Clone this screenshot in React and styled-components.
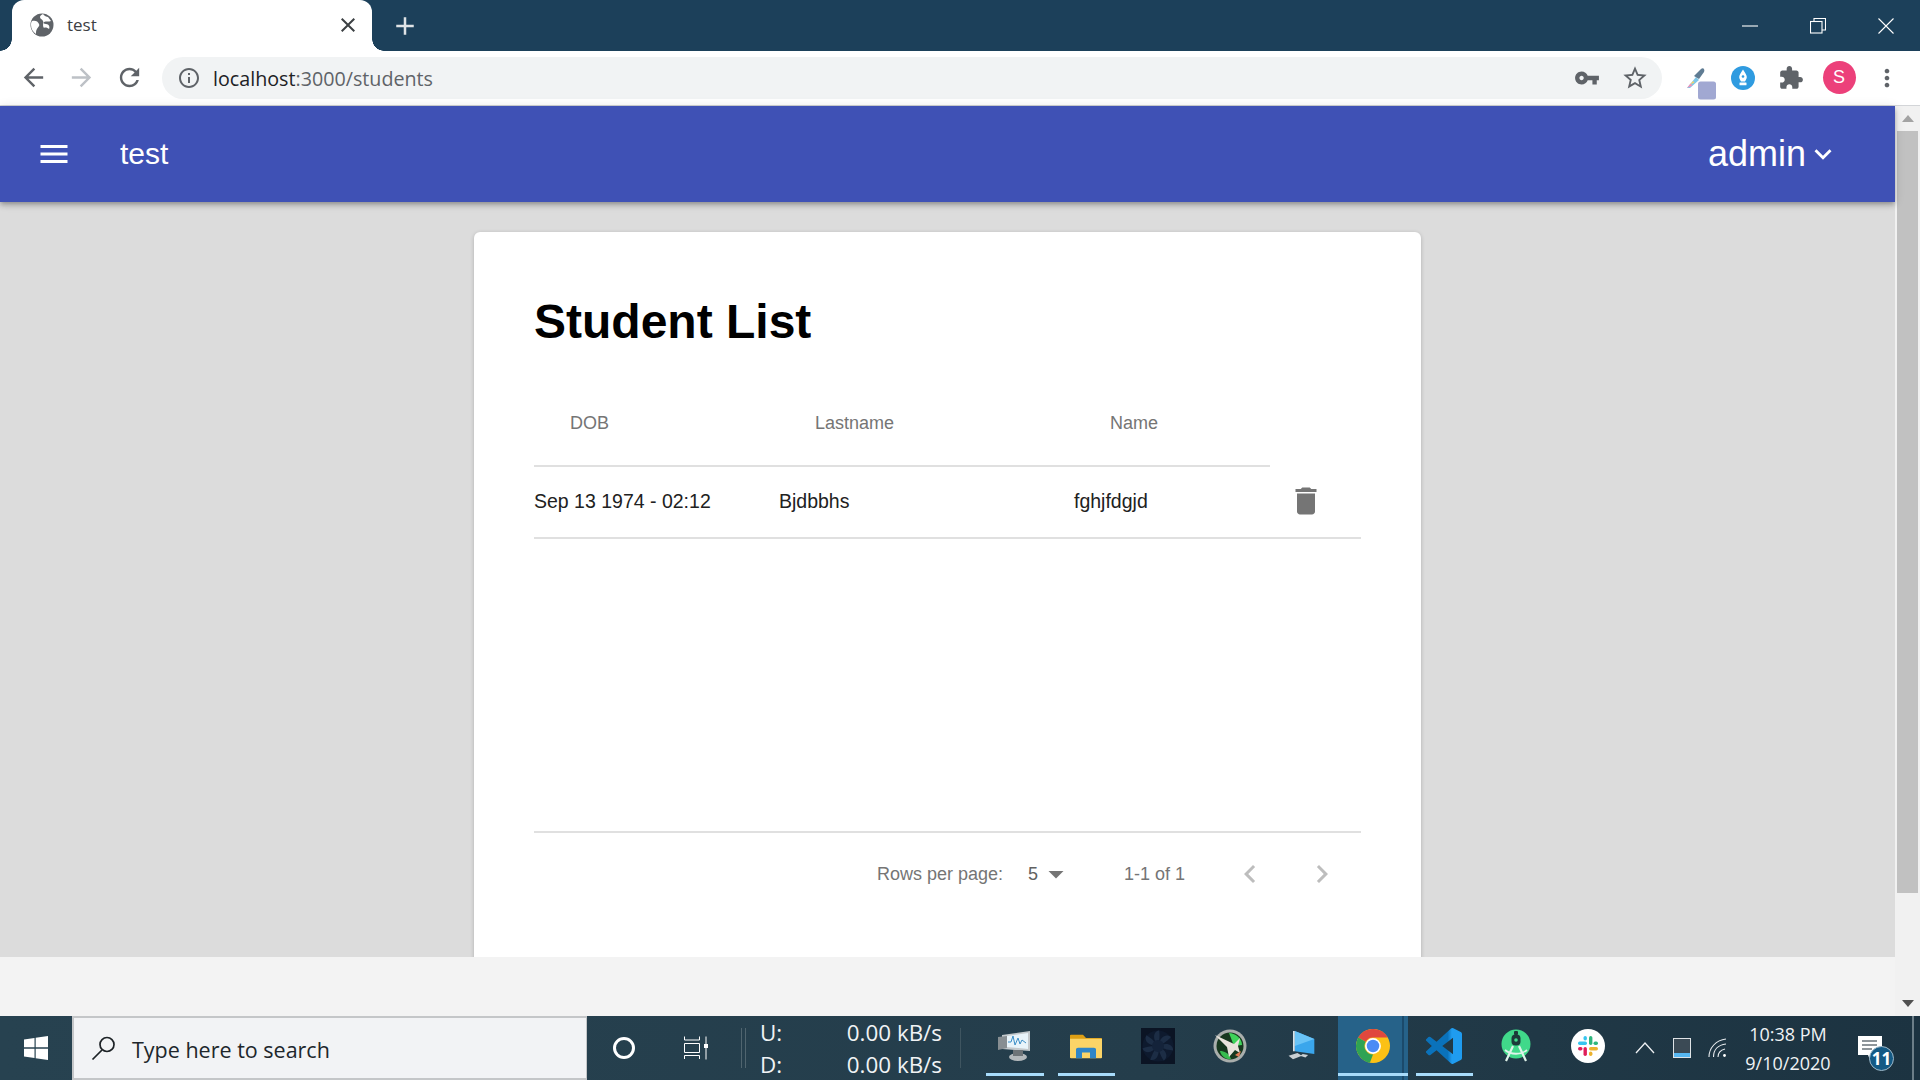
import React from "react"
import styled, { createGlobalStyle } from "styled-components"

const ICONS = {
  close:
    "M19 6.41L17.59 5 12 10.59 6.41 5 5 6.41 10.59 12 5 17.59 6.41 19 12 13.41 17.59 19 19 17.59 13.41 12z",
  plus: "M19 13h-6v6h-2v-6H5v-2h6V5h2v6h6v2z",
  back: "M20 11H7.83l5.59-5.59L12 4l-8 8 8 8 1.41-1.41L7.83 13H20v-2z",
  forward: "M4 11h12.17l-5.59-5.59L12 4l8 8-8 8-1.41-1.41L16.17 13H4v-2z",
  reload:
    "M17.65 6.35C16.2 4.9 14.21 4 12 4c-4.42 0-7.99 3.58-7.99 8s3.57 8 7.99 8c3.73 0 6.84-2.55 7.73-6h-2.08c-.82 2.33-3.04 4-5.65 4-3.31 0-6-2.69-6-6s2.69-6 6-6c1.66 0 3.14.69 4.22 1.78L13 11h7V4l-2.35 2.35z",
  info:
    "M11 7h2v2h-2zm0 4h2v6h-2zm1-9C6.48 2 2 6.48 2 12s4.48 10 10 10 10-4.48 10-10S17.52 2 12 2zm0 18c-4.41 0-8-3.59-8-8s3.59-8 8-8 8 3.59 8 8-3.59 8-8 8z",
  key: "M12.65 10C11.83 7.67 9.61 6 7 6c-3.31 0-6 2.69-6 6s2.69 6 6 6c2.61 0 4.83-1.67 5.65-4H17v4h4v-4h2v-4H12.65zM7 14c-1.1 0-2-.9-2-2s.9-2 2-2 2 .9 2 2-.9 2-2 2z",
  star:
    "M22 9.24l-7.19-.62L12 2 9.19 8.63 2 9.24l5.46 4.73L5.82 21 12 17.27 18.18 21l-1.63-7.03L22 9.24zM12 15.4l-3.76 2.27 1-4.28-3.32-2.88 4.38-.38L12 6.1l1.71 4.04 4.38.38-3.32 2.88 1 4.28L12 15.4z",
  puzzle:
    "M20.5 11H19V7c0-1.1-.9-2-2-2h-4V3.5C13 2.12 11.88 1 10.5 1S8 2.12 8 3.5V5H4c-1.1 0-1.99.9-1.99 2v3.8H3.5c1.49 0 2.7 1.21 2.7 2.7s-1.21 2.7-2.7 2.7H2V20c0 1.1.9 2 2 2h3.8v-1.5c0-1.49 1.21-2.7 2.7-2.7 1.49 0 2.7 1.21 2.7 2.7V22H17c1.1 0 2-.9 2-2v-4h1.5c1.38 0 2.5-1.12 2.5-2.5S21.88 11 20.5 11z",
  dots:
    "M12 8c1.1 0 2-.9 2-2s-.9-2-2-2-2 .9-2 2 .9 2 2 2zm0 2c-1.1 0-2 .9-2 2s.9 2 2 2 2-.9 2-2-.9-2-2-2zm0 6c-1.1 0-2 .9-2 2s.9 2 2 2 2-.9 2-2-.9-2-2-2z",
  menu: "M3 18h18v-2H3v2zm0-5h18v-2H3v2zm0-7v2h18V6H3z",
  down: "M7.41 8.59L12 13.17l4.59-4.58L18 10l-6 6-6-6 1.41-1.41z",
  trash: "M6 19c0 1.1.9 2 2 2h8c1.1 0 2-.9 2-2V7H6v12zM19 4h-3.5l-1-1h-5l-1 1H5v2h14V4z",
  caret: "M7 10l5 5 5-5z",
  prev: "M15.41 7.41L14 6l-6 6 6 6 1.41-1.41L10.83 12z",
  next: "M10 6L8.59 7.41 13.17 12l-4.58 4.59L10 18l6-6z",
}

const GlobalStyle = createGlobalStyle`
  html, body {
    margin: 0;
    padding: 0;
    overflow: hidden;
    background: #f3f3f3;
    font-family: "Liberation Sans", Arial, sans-serif;
  }
  * { box-sizing: border-box; }
`

const Screen = styled.div`
  width: 1920px;
  height: 1080px;
  display: flex;
  flex-direction: column;
  overflow: hidden;
`

const Svg = styled.svg`
  display: block;
  flex: none;
  width: ${(p) => p.$size}px;
  height: ${(p) => p.$size}px;
  fill: ${(p) => p.$color || "currentColor"};
`

const Icon = ({ name, size = 24, color }) => (
  <Svg viewBox="0 0 24 24" $size={size} $color={color}>
    <path d={ICONS[name]} />
  </Svg>
)

/* browser chrome */

const TabStrip = styled.div`
  height: 51px;
  flex: none;
  display: flex;
  align-items: flex-end;
  padding-left: 12px;
  background: #1c405a;
  color: #fff;
`

const Tab = styled.div`
  position: relative;
  width: 360px;
  height: 51px;
  display: flex;
  align-items: center;
  padding: 0 12px 2px 17px;
  background: #fff;
  border-radius: 12px 12px 0 0;
  color: #3c4043;

  &::before,
  &::after {
    content: "";
    position: absolute;
    bottom: 0;
    width: 12px;
    height: 12px;
  }
  &::before {
    left: -12px;
    background: radial-gradient(circle at 0 0, transparent 11.5px, #fff 12px);
  }
  &::after {
    right: -12px;
    background: radial-gradient(circle at 100% 0, transparent 11.5px, #fff 12px);
  }
`

const TabTitle = styled.span`
  flex: 1;
  margin-left: 12px;
  font: 17px "Open Sans", sans-serif;
  color: #3c4043;
`

const NewTab = styled.div`
  margin-left: 18px;
  align-self: center;
  color: #dfe3e6;
`

const WindowControls = styled.div`
  margin-left: auto;
  height: 100%;
  display: flex;
  align-items: center;
`

const WindowButton = styled.div`
  width: 68px;
  display: flex;
  justify-content: center;
`

const LineIcon = styled.svg`
  width: 16px;
  height: 16px;
  fill: none;
  stroke: #fff;
  stroke-width: 1.1;
`

const Toolbar = styled.div`
  height: 55px;
  flex: none;
  display: flex;
  align-items: center;
  padding: 0 9px 1px;
  background: #fff;
  border-bottom: 1px solid #d3d5d8;
`

const ToolButton = styled.div`
  width: 48px;
  height: 48px;
  flex: none;
  display: flex;
  align-items: center;
  justify-content: center;
`

const Omnibox = styled.div`
  flex: 1;
  height: 42px;
  margin: 0 9px;
  display: flex;
  align-items: center;
  padding: 0 3px 0 15px;
  background: #f1f3f4;
  border-radius: 21px;
`

const Url = styled.div`
  flex: 1;
  margin-left: 12px;
  padding-top: 1px;
  font: 19.7px "Open Sans", sans-serif;
  color: #5f6368;
`

const UrlHost = styled.span`
  color: #202124;
`

const OmniAction = styled.div`
  width: 48px;
  display: flex;
  justify-content: center;
`

const Avatar = styled.div`
  width: 33px;
  height: 33px;
  border-radius: 50%;
  display: flex;
  align-items: center;
  justify-content: center;
  background: #ec407a;
  color: #fff;
  font-size: 18px;
`

/* page */

const Viewport = styled.div`
  flex: 1;
  min-height: 0;
  display: flex;
`

const PageColumn = styled.div`
  flex: 1;
  min-width: 0;
  display: flex;
  flex-direction: column;
`

const AppBar = styled.header`
  position: relative;
  z-index: 2;
  height: 96px;
  flex: none;
  display: flex;
  align-items: center;
  padding: 0 55px 0 36px;
  background: #3f51b5;
  color: #fff;
  box-shadow: 0 2px 4px -1px rgba(0, 0, 0, 0.2), 0 4px 5px rgba(0, 0, 0, 0.14),
    0 1px 10px rgba(0, 0, 0, 0.12);
`

const AppTitle = styled.div`
  margin-left: 48px;
  font-size: 30px;
`

const UserMenu = styled.div`
  margin-left: auto;
  display: flex;
  align-items: center;
  font-size: 36px;
`

const Content = styled.main`
  flex: 1;
  min-height: 0;
  overflow: hidden;
  padding-top: 30px;
  background: #dcdcdc;
`

const Card = styled.section`
  width: 947px;
  height: 900px;
  margin: 0 auto;
  padding: 61px 60px;
  background: #fff;
  border-radius: 6px;
  box-shadow: 0 1px 4px rgba(0, 0, 0, 0.2);
`

const Title = styled.h1`
  margin: 0 0 31px;
  font-size: 48px;
  line-height: 58px;
  font-weight: 700;
  color: #000;
`

const Table = styled.table`
  width: 100%;
  table-layout: fixed;
  border-collapse: collapse;
`

const HeadCell = styled.th`
  height: 84px;
  padding: 0 0 0 36px;
  text-align: left;
  font-size: 18px;
  font-weight: 400;
  color: #757575;
  border-bottom: ${(p) => (p.$empty ? "none" : "2px solid #e0e0e0")};
`

const Cell = styled.td`
  height: 72px;
  padding: 0 0 2px;
  font-size: 19.5px;
  color: #212121;
  border-bottom: 2px solid #e0e0e0;
`

const TrashWrap = styled.div`
  width: 72px;
  display: flex;
  justify-content: center;
`

const Filler = styled.td`
  height: 293px;
  padding: 0;
`

const Pagination = styled.div`
  height: 84px;
  display: flex;
  align-items: center;
  padding-left: 343px;
  border-top: 2px solid #e0e0e0;
  font-size: 18px;
  color: #757575;
`

const PerPage = styled.div`
  margin-left: 25px;
  display: flex;
  align-items: center;
  color: #616161;
`

const PageRange = styled.span`
  margin-left: 50px;
`

const PageButton = styled.div`
  width: 72px;
  display: flex;
  justify-content: center;
  margin-left: ${(p) => p.$gap || 0}px;
`

const BottomStrip = styled.div`
  height: 59px;
  flex: none;
  background: #f3f3f3;
`

const Scrollbar = styled.aside`
  width: 25px;
  flex: none;
  display: flex;
  flex-direction: column;
  align-items: center;
  background: #f1f1f1;
`

const ScrollArrow = styled.div`
  height: 25px;
  flex: none;
  display: flex;
  align-items: center;
  color: ${(p) => p.$color};
`

const ScrollThumb = styled.div`
  width: 21px;
  height: 762px;
  background: #c1c1c1;
`

const ScrollTrack = styled.div`
  flex: 1;
`

/* taskbar */

const Taskbar = styled.footer`
  height: 64px;
  flex: none;
  display: flex;
  align-items: stretch;
  background: linear-gradient(90deg, #274250 0%, #243d4b 60%, #1c3341 100%);
  color: #f0f3f5;
  font-family: "Open Sans", sans-serif;
`

const TaskSlot = styled.div`
  width: ${(p) => p.$width || 72}px;
  flex: none;
  display: flex;
  align-items: center;
  justify-content: center;
`

const SearchBox = styled.div`
  width: 515px;
  flex: none;
  display: flex;
  align-items: center;
  padding-left: 17px;
  background: #f2f3f5;
  border: 2px solid #c4c6c8;
  border-right-width: 1px;
  color: #20262b;
  font-size: 21.5px;
`

const SearchLabel = styled.span`
  margin-left: 15px;
  padding-top: 2px;
`

const DoubleRule = styled.div`
  width: 5px;
  height: 40px;
  flex: none;
  margin: 12px 0 0 9px;
  border-left: 1px solid #50656f;
  border-right: 1px solid #50656f;
`

const Meter = styled.div`
  width: 182px;
  margin-left: 14px;
  padding-top: 2px;
  flex: none;
  display: flex;
  flex-direction: column;
  justify-content: center;
  font-size: 22.4px;
  line-height: 32px;
`

const MeterRow = styled.div`
  display: flex;
  justify-content: space-between;
`

const Rule = styled.div`
  width: 1px;
  height: 40px;
  margin: 12px 18px 0 18px;
  flex: none;
  background: #3f5560;
`

const AppSlot = styled.div`
  width: 71.6px;
  flex: none;
  display: flex;
  flex-direction: column;
  background: ${(p) => (p.$active ? "linear-gradient(90deg,#266289 0,#266289 90%,#1b4a6b 90%,#1b4a6b 93%,#266289 93%)" : "transparent")};
  background-clip: content-box;
  padding: ${(p) => (p.$active ? "0 1px" : "0")};
`

const AppIcon = styled.div`
  flex: 1;
  display: flex;
  align-items: center;
  justify-content: center;
  padding-top: 3px;
`

const RunningBar = styled.div`
  height: 3px;
  margin: ${(p) => (p.$full ? "0" : "0 7px")};
  margin-bottom: 4px;
  background: ${(p) => (p.$on ? "#a8dcfb" : "transparent")};
`

const Tray = styled.div`
  flex: none;
  display: flex;
  align-items: center;
  padding-left: 3.6px;
`

const Clock = styled.div`
  width: 104px;
  padding-top: 2px;
  text-align: center;
  font-size: 18px;
  line-height: 29px;
`

const Notice = styled.div`
  position: relative;
  width: 40px;
  height: 40px;
  margin: 0 14px 0 18px;
  padding-top: 8px;
`

const Badge = styled.div`
  position: absolute;
  right: 4px;
  bottom: -3px;
  width: 25px;
  height: 25px;
  display: flex;
  align-items: center;
  justify-content: center;
  border-radius: 50%;
  background: #145a85;
  border: 1px solid #9fb9c9;
  color: #fff;
  font-size: 17px;
  font-weight: 700;
`

const Edge = styled.div`
  width: 2px;
  height: 64px;
  flex: none;
  margin-right: 6px;
  background: #6c7e88;
`

/* drawn logos */

const Globe = () => (
  <svg width="26" height="26" viewBox="0 0 26 26">
    <circle cx="13" cy="13" r="11.500" fill="#5f6368" />
    <path d="M3 9c3-1 6 0 7 3 1 2-1 3-2 5-1 1-1 3-1 5-3-2-5-5-5-9 0-1 0-3 1-4zM14 2c1 2 4 3 5 3l3 4c-2 1-5 0-7 1-1 1 0 2 2 2 3 0 4 3 3 5-1-1-4-2-5-1-2-3 0-5-1-7s-3-2-3-4c0-1 1-2 3-3z" fill="#fff" />
  </svg>
)

const Eyedropper = () => (
  <svg width="44" height="44" viewBox="0 0 44 44">
    <path d="M14 32l9-11 3 3-9 8z" fill="#7fc7e8" />
    <path d="M14 32l3.500-4.500 2 2z" fill="#f28fb8" />
    <path d="M17 28.500l3-3.500 1.500 1.500z" fill="#f3d36b" />
    <path d="M21 20l7-7c1-1 2.500-1 3 0s.5 2 0 3l-5 7z" fill="#5f7c93" />
    <rect x="25" y="25.500" width="18" height="18" rx="2.500" fill="#a1a8d2" />
  </svg>
)

const PenBadge = () => (
  <svg width="24" height="24" viewBox="0 0 24 24">
    <circle cx="12" cy="12" r="12" fill="#2f9be0" />
    <path d="M12 3.500c2 3 3.800 5.600 3.800 7.400 0 1.500-1.100 3.200-1.800 4.600H10c-.7-1.400-1.800-3.100-1.800-4.600C8.200 9.100 10 6.500 12 3.500z" fill="#fff" />
    <circle cx="12" cy="10.500" r="1.300" fill="#2f9be0" />
    <rect x="8.500" y="16.500" width="7" height="2.800" rx=".5" fill="#fff" />
  </svg>
)

const WindowsLogo = () => (
  <svg width="24" height="24" viewBox="0 0 24 24" fill="#fff">
    <path d="M0 3.500L10.500 2v9.300H0zM11.700 1.800L24 0v11.300H11.700zM0 12.700h10.500V22L0 20.500zM11.700 12.700H24V24l-12.300-1.800z" />
  </svg>
)

const SearchGlyph = () => (
  <svg width="26" height="26" viewBox="0 0 26 26" fill="none" stroke="#1d2226" strokeWidth="1.700">
    <circle cx="16" cy="9.500" r="7" />
    <path d="M11 15L1.500 24.500" />
  </svg>
)

const TaskViewGlyph = () => (
  <svg width="24" height="24" viewBox="0 0 24 24" fill="none" stroke="#fff" strokeWidth="1">
    <path d="M.5 .5V4h15V.5M.5 7.500h15v9H.5zM.5 23v-3.500h15V23M22 .5v23" />
    <rect x="20.500" y="8.500" width="3" height="3" fill="#fff" />
  </svg>
)

const PerfIcon = () => (
  <svg width="34" height="30" viewBox="0 0 34 30">
    <path d="M4 4l28-4v20L4 18z" fill="#c3c9cc" />
    <path d="M9 5l21-3v16L9 16z" fill="#e8f4fa" />
    <path d="M10 11h3l2-6 2 9 3-7 2 6 2-4 4 3" fill="none" stroke="#3b8ec7" strokeWidth="1" />
    <path d="M0 6l9-1v12l-9 2z" fill="#878e92" />
    <ellipse cx="20" cy="26" rx="9" ry="4" fill="#b4b9bc" />
    <path d="M15 19h10v6H15z" fill="#6e7478" />
  </svg>
)

const FolderIcon = () => (
  <svg width="32" height="26" viewBox="0 0 32 32" preserveAspectRatio="none">
    <path d="M0 3a1 1 0 0 1 1-1h12l3 4h15a1 1 0 0 1 1 1v4H0z" fill="#dd9f14" />
    <path d="M0 7h32v23a1 1 0 0 1-1 1H1a1 1 0 0 1-1-1z" fill="#fbd467" />
    <path d="M6 31V20a2 2 0 0 1 2-2h16a2 2 0 0 1 2 2v11h-6v-7h-8v7z" fill="#2f86c8" />
  </svg>
)

const FanIcon = () => (
  <svg width="34" height="36" viewBox="0 0 34 36">
    <rect width="34" height="36" fill="#0b1424" />
    <circle cx="17" cy="18" r="15.500" fill="#0e1a2e" />
    <g fill="#1c2d45">
      {[0, 51, 103, 154, 206, 257, 309].map((a) => (
        <path key={a} d="M17 18C19 9 25 5 30 9 27 12 24 15 17 18z" transform={`rotate(${a} 17 18)`} />
      ))}
    </g>
    <circle cx="17" cy="18" r="6" fill="#14233a" />
  </svg>
)

const JetIcon = () => (
  <svg width="34" height="34" viewBox="0 0 34 34">
    <circle cx="17" cy="17" r="16.500" fill="#a9aeac" />
    <circle cx="17" cy="17" r="13.500" fill="#17381f" />
    <path d="M16 4c6 0 13 5 13 12l-8 1z" fill="#3fd35a" />
    <path d="M7 22c4 0 9 2 11 8-5 1-10-3-11-8z" fill="#37bd4f" />
    <path d="M2 6l19 9 6-6-2 8 2 7-5-3-6 7-2-10z" fill="#e9e4dc" />
    <path d="M22 26l6-4-2 6z" fill="#e07a54" />
  </svg>
)

const PcIcon = () => (
  <svg width="32" height="32" viewBox="0 0 34 36">
    <path d="M10 1l22 9v17l-22-3z" fill="#3aa6ec" />
    <path d="M10 1l22 9-22 8z" fill="#69c3f6" />
    <path d="M8 1l2 0v23H8z" fill="#d8e3ea" />
    <path d="M3 29l10-3 5 3-10 4zM19 27l6 1-3 3-6-2z" fill="#c9d0d4" />
  </svg>
)

const ChromeIcon = () => (
  <svg width="34" height="34" viewBox="0 0 24 24">
    <circle cx="12" cy="12" r="12" fill="#fbc116" />
    <path d="M1.600 6A12 12 0 0 1 22.400 6H12a6 6 0 0 0-5.200 3z" fill="#e0483e" />
    <path d="M1.600 6l5.200 3a6 6 0 0 0 5.200 9l-2.200 5.800A12 12 0 0 1 1.600 6z" fill="#2fa354" />
    <circle cx="12" cy="12" r="5.600" fill="#fff" />
    <circle cx="12" cy="12" r="4.400" fill="#4c8bf5" />
  </svg>
)

const VsCodeIcon = () => (
  <svg width="36" height="36" viewBox="0 0 24 24">
    <defs>
      <linearGradient id="vsc" x1="0" x2="1" y1="0" y2="0">
        <stop offset="0.6" stopColor="#0a72bb" />
        <stop offset="0.72" stopColor="#1f9cf0" />
      </linearGradient>
    </defs>
    <path
      fill="url(#vsc)"
      d="M23.150 2.587L18.210.21a1.494 1.494 0 0 0-1.705.29l-9.460 8.630-4.120-3.128a.999.999 0 0 0-1.276.057L.327 7.261A1 1 0 0 0 .326 8.740L3.899 12 .326 15.260a1 1 0 0 0 .001 1.479L1.650 17.940a.999.999 0 0 0 1.276.057l4.120-3.128 9.460 8.630a1.492 1.492 0 0 0 1.704.29l4.942-2.377A1.500 1.500 0 0 0 24 20.060V3.939a1.500 1.500 0 0 0-.850-1.352zm-5.146 14.861L10.826 12l7.178-5.448v10.896z"
    />
  </svg>
)

const AndroidStudioIcon = () => (
  <svg width="30" height="34" viewBox="0 0 30 34">
    <circle cx="15" cy="15" r="14.500" fill="#40d98a" />
    <rect x="13" y="2" width="4" height="4" rx="1" fill="#1c3a3a" />
    <rect x="10.500" y="5.500" width="9" height="11" rx="4" fill="#1c3a3a" />
    <circle cx="15" cy="11" r="1.800" fill="#40d98a" />
    <path d="M12 17L5 32M18 17l7 15" stroke="#dff3ea" strokeWidth="2.200" fill="none" />
    <path d="M4 21c6 5 16 5 22 0" stroke="#dff3ea" strokeWidth="1.800" fill="none" />
  </svg>
)

const SlackIcon = () => (
  <svg width="34" height="34" viewBox="0 0 34 34">
    <circle cx="17" cy="17" r="17" fill="#fff" />
    <rect x="7" y="12.500" width="9" height="3.400" rx="1.700" fill="#36c5f0" />
    <rect x="12.500" y="7" width="3.400" height="4.500" rx="1.700" fill="#36c5f0" />
    <rect x="18" y="7" width="3.400" height="9" rx="1.700" fill="#2eb67d" />
    <rect x="22.500" y="12.500" width="4.500" height="3.400" rx="1.700" fill="#2eb67d" />
    <rect x="18" y="18" width="9" height="3.400" rx="1.700" fill="#ecb22e" />
    <rect x="18" y="22.500" width="3.400" height="4.500" rx="1.700" fill="#ecb22e" />
    <rect x="12.500" y="18" width="3.400" height="9" rx="1.700" fill="#e01e5a" />
    <rect x="7" y="18" width="4.500" height="3.400" rx="1.700" fill="#e01e5a" />
  </svg>
)

const TrayDevice = () => (
  <svg width="18" height="20" viewBox="0 0 18 20">
    <rect width="18" height="20" fill="#dfe3e6" />
    <rect x="1" y="1" width="16" height="18" fill="#3b4a55" />
    <rect x="1" y="15" width="16" height="4" fill="#57b8f2" />
  </svg>
)

const WifiGlyph = () => (
  <svg width="20" height="20" viewBox="0 0 20 20" fill="none" stroke="#e9edf0" strokeWidth="1.100">
    <path d="M1 19C1 10 8 2 18 1M5.500 19C5.500 12 10 7 18 6M10 19c0-4 3-7 7-8" />
    <circle cx="16.500" cy="17.500" r="1.400" fill="#fff" stroke="none" />
  </svg>
)

const NoticeGlyph = () => (
  <svg width="26" height="26" viewBox="0 0 26 26" style={{ display: "block" }}>
    <path d="M0 0h24v19H14l-2 5-2-5H0z" fill="#fff" />
    <path d="M4 5h15M4 9h15M4 13h10" stroke="#1f2d36" strokeWidth="1.200" />
  </svg>
)

const apps = [
  { key: "perf", icon: <PerfIcon />, on: true },
  { key: "files", icon: <FolderIcon />, on: true },
  { key: "fan", icon: <FanIcon /> },
  { key: "jet", icon: <JetIcon /> },
  { key: "pc", icon: <PcIcon /> },
  { key: "chrome", icon: <ChromeIcon />, on: true, active: true },
  { key: "code", icon: <VsCodeIcon />, on: true },
  { key: "studio", icon: <AndroidStudioIcon /> },
  { key: "slack", icon: <SlackIcon /> },
]

const App = () => (
  <Screen>
    <GlobalStyle />
    <TabStrip>
      <Tab>
        <Globe />
        <TabTitle>test</TabTitle>
        <Icon name="close" size={24} color="#3c4043" />
      </Tab>
      <NewTab>
        <Icon name="plus" size={30} />
      </NewTab>
      <WindowControls>
        <WindowButton>
          <LineIcon viewBox="0 0 16 16">
            <path d="M0 8h16" />
          </LineIcon>
        </WindowButton>
        <WindowButton>
          <LineIcon viewBox="0 0 16 16">
            <rect x=".5" y="3.500" width="11.500" height="11.500" />
            <path d="M4 3.500V.5h11.500V12H12" />
          </LineIcon>
        </WindowButton>
        <WindowButton>
          <LineIcon viewBox="0 0 16 16">
            <path d="M.5.500l15 15M15.500.500l-15 15" />
          </LineIcon>
        </WindowButton>
      </WindowControls>
    </TabStrip>

    <Toolbar>
      <ToolButton>
        <Icon name="back" size={29} color="#5f6368" />
      </ToolButton>
      <ToolButton>
        <Icon name="forward" size={29} color="#bdc1c6" />
      </ToolButton>
      <ToolButton>
        <Icon name="reload" size={29} color="#5f6368" />
      </ToolButton>
      <Omnibox>
        <Icon name="info" size={24} color="#5f6368" />
        <Url>
          <UrlHost>localhost</UrlHost>:3000/students
        </Url>
        <OmniAction>
          <Icon name="key" size={26} color="#5f6368" />
        </OmniAction>
        <OmniAction>
          <Icon name="star" size={28} color="#5f6368" />
        </OmniAction>
      </Omnibox>
      <ToolButton>
        <Eyedropper />
      </ToolButton>
      <ToolButton>
        <PenBadge />
      </ToolButton>
      <ToolButton>
        <Icon name="puzzle" size={26} color="#5f6368" />
      </ToolButton>
      <ToolButton>
        <Avatar>S</Avatar>
      </ToolButton>
      <ToolButton>
        <Icon name="dots" size={28} color="#5f6368" />
      </ToolButton>
    </Toolbar>

    <Viewport>
      <PageColumn>
        <AppBar>
          <Icon name="menu" size={36} />
          <AppTitle>test</AppTitle>
          <UserMenu>
            admin
            <Icon name="down" size={34} />
          </UserMenu>
        </AppBar>
        <Content>
          <Card>
            <Title>Student List</Title>
            <Table>
              <colgroup>
                <col width="245" />
                <col width="295" />
                <col width="196" />
                <col width="91" />
              </colgroup>
              <thead>
                <tr>
                  <HeadCell>DOB</HeadCell>
                  <HeadCell>Lastname</HeadCell>
                  <HeadCell>Name</HeadCell>
                  <HeadCell $empty />
                </tr>
              </thead>
              <tbody>
                <tr>
                  <Cell>Sep 13 1974 - 02:12</Cell>
                  <Cell>Bjdbbhs</Cell>
                  <Cell>fghjfdgjd</Cell>
                  <Cell>
                    <TrashWrap>
                      <Icon name="trash" size={36} color="#757575" />
                    </TrashWrap>
                  </Cell>
                </tr>
                <tr>
                  <Filler colSpan={4} />
                </tr>
              </tbody>
            </Table>
            <Pagination>
              Rows per page:
              <PerPage>
                5
                <Icon name="caret" size={36} color="#757575" />
              </PerPage>
              <PageRange>1-1 of 1</PageRange>
              <PageButton $gap={29}>
                <Icon name="prev" size={36} color="#bdbdbd" />
              </PageButton>
              <PageButton>
                <Icon name="next" size={36} color="#bdbdbd" />
              </PageButton>
            </Pagination>
          </Card>
        </Content>
        <BottomStrip />
      </PageColumn>
      <Scrollbar>
        <ScrollArrow $color="#a3a3a3">
          <svg width="12" height="7" viewBox="0 0 12 7">
            <path d="M6 0l6 7H0z" fill="currentColor" />
          </svg>
        </ScrollArrow>
        <ScrollThumb />
        <ScrollTrack />
        <ScrollArrow $color="#505050">
          <svg width="12" height="7" viewBox="0 0 12 7">
            <path d="M6 7L0 0h12z" fill="currentColor" />
          </svg>
        </ScrollArrow>
      </Scrollbar>
    </Viewport>

    <Taskbar>
      <TaskSlot>
        <WindowsLogo />
      </TaskSlot>
      <SearchBox>
        <SearchGlyph />
        <SearchLabel>Type here to search</SearchLabel>
      </SearchBox>
      <TaskSlot $width={73}>
        <svg width="24" height="24" viewBox="0 0 24 24" fill="none" stroke="#fff" strokeWidth="3">
          <circle cx="12" cy="12" r="9.500" />
        </svg>
      </TaskSlot>
      <TaskSlot>
        <TaskViewGlyph />
      </TaskSlot>
      <DoubleRule />
      <Meter>
        <MeterRow>
          <span>U:</span>
          <span>0.00 kB/s</span>
        </MeterRow>
        <MeterRow>
          <span>D:</span>
          <span>0.00 kB/s</span>
        </MeterRow>
      </Meter>
      <Rule />
      {apps.map((app) => (
        <AppSlot key={app.key} $active={app.active}>
          <AppIcon>{app.icon}</AppIcon>
          <RunningBar $on={app.on} $full={app.active} />
        </AppSlot>
      ))}
      <Tray>
        <TaskSlot $width={37}>
          <svg width="20" height="12" viewBox="0 0 20 12" fill="none" stroke="#eef1f3" strokeWidth="1.300">
            <path d="M1 11l9-10 9 10" />
          </svg>
        </TaskSlot>
        <TaskSlot $width={36}>
          <TrayDevice />
        </TaskSlot>
        <TaskSlot $width={36}>
          <WifiGlyph />
        </TaskSlot>
        <Clock>
          <div>10:38 PM</div>
          <div>9/10/2020</div>
        </Clock>
        <Notice>
          <NoticeGlyph />
          <Badge>11</Badge>
        </Notice>
        <Edge />
      </Tray>
    </Taskbar>
  </Screen>
)

export default App
